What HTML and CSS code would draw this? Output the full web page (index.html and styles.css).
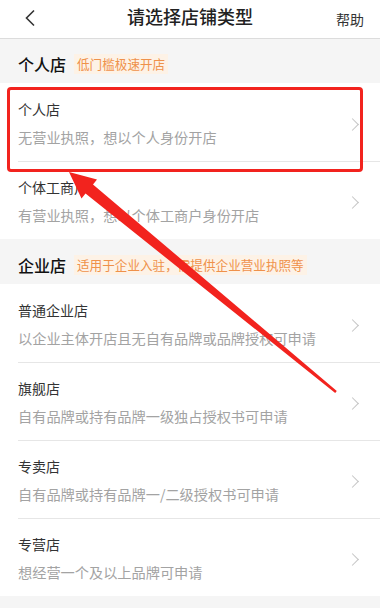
FILE: index.html
```html
<!DOCTYPE html>
<html lang="zh">
<head>
<meta charset="utf-8">
<title>请选择店铺类型</title>
<link rel="stylesheet" href="styles.css">
</head>
<body>
<div class="page">
  <header class="nav">
    <span class="back"><svg width="12" height="18" viewBox="0 0 12 18"><path d="M10 1.5 L2.5 9 L10 16.5" fill="none" stroke="#333" stroke-width="1.6"/></svg></span>
    <h1 class="title">请选择店铺类型</h1>
    <span class="help">帮助</span>
  </header>

  <section class="group">
    <div class="group-head"><span class="group-name">个人店</span><span class="tag">低门槛极速开店</span></div>
    <div class="row">
      <div class="row-text"><div class="row-title">个人店</div><div class="row-sub">无营业执照，想以个人身份开店</div></div>
      <span class="chev"></span>
    </div>
    <div class="row">
      <div class="row-text"><div class="row-title">个体工商户</div><div class="row-sub">有营业执照，想以个体工商户身份开店</div></div>
      <span class="chev"></span>
    </div>
  </section>

  <section class="group">
    <div class="group-head"><span class="group-name">企业店</span><span class="tag">适用于企业入驻，需提供企业营业执照等</span></div>
    <div class="row">
      <div class="row-text"><div class="row-title">普通企业店</div><div class="row-sub">以企业主体开店且无自有品牌或品牌授权可申请</div></div>
      <span class="chev"></span>
    </div>
    <div class="row">
      <div class="row-text"><div class="row-title">旗舰店</div><div class="row-sub">自有品牌或持有品牌一级独占授权书可申请</div></div>
      <span class="chev"></span>
    </div>
    <div class="row">
      <div class="row-text"><div class="row-title">专卖店</div><div class="row-sub">自有品牌或持有品牌一/二级授权书可申请</div></div>
      <span class="chev"></span>
    </div>
    <div class="row">
      <div class="row-text"><div class="row-title">专营店</div><div class="row-sub">想经营一个及以上品牌可申请</div></div>
      <span class="chev"></span>
    </div>
  </section>

  <svg class="annot" width="380" height="608" viewBox="0 0 380 608">
    <rect x="8.5" y="88.5" width="353" height="82" rx="2.5" fill="none" stroke="#f2231e" stroke-width="3"/>
    <polygon points="69,172 97,179.5 93,184.5 336.8,391 335.2,393 85.5,193.5 81.5,198.5" fill="#f2231e"/>
  </svg>
</div>
</body>
</html>
```

FILE: styles.css
```css
* { box-sizing: border-box; }
html, body { margin: 0; padding: 0; }
body {
  width: 380px;
  height: 608px;
  overflow: hidden;
  background: #f5f5f5;
  font-family: "Noto Sans CJK SC", "Noto Sans", sans-serif;
  color: #333;
}
.page { position: relative; width: 380px; height: 608px; }

.nav {
  height: 39px;
  background: #fff;
  border-bottom: 1px solid #dcdcdc;
  display: flex;
  align-items: center;
  justify-content: space-between;
  padding: 0 16px 0 24px;
  position: relative;
}
.back { display: flex; width: 12px; height: 18px; margin-top: -2px; }
.title {
  position: absolute;
  left: 0; right: 0; top: 0;
  margin: 0;
  text-align: center;
  font-size: 18px;
  line-height: 32px;
  font-weight: 500;
  color: #222;
  pointer-events: none;
}
.help { font-size: 14px; color: #333; line-height: 32px; }

.group-head {
  height: 44px;
  display: flex;
  align-items: center;
  padding: 0 18px;
  padding-top: 6px;
}
.group + .group .group-head { height: 45px; }
.group-name { font-size: 16px; font-weight: 500; color: #111; margin-right: 8px; }
.tag {
  font-size: 12.6px;
  line-height: 20px;
  padding: 0 3px;
  color: #ef914a;
  background: #fdf2e6;
}

.row {
  height: 78px;
  background: #fff;
  display: flex;
  align-items: center;
  padding-left: 18px;
  position: relative;
}
.row + .row::before {
  content: "";
  position: absolute;
  left: 18px; right: 0; top: 0;
  border-top: 1px solid #e6e6e6;
}
.row-text { flex: 1; padding-top: 2px; }
.row-title { font-size: 14px; line-height: 22px; color: #333; }
.row-sub { font-size: 14.2px; line-height: 22px; margin-top: 6px; color: #a3a3a3; }
.chev {
  width: 9px; height: 9px;
  border-top: 1px solid #c4c4c4;
  border-right: 1px solid #c4c4c4;
  transform: rotate(45deg);
  margin-right: 23px;
  margin-top: 4px;
}

.annot { position: absolute; left: 0; top: 0; pointer-events: none; }
```
